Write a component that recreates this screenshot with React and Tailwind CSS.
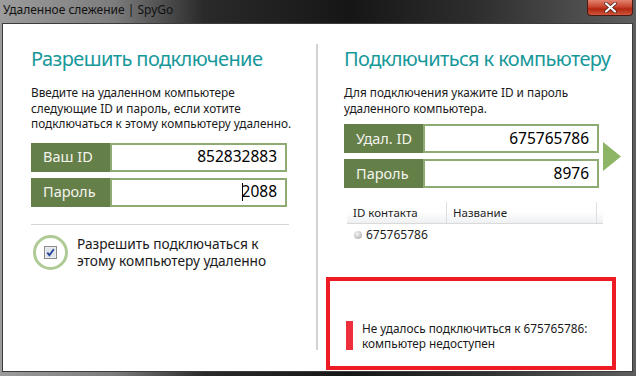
import React from 'react';

const font = { fontFamily: '"Noto Sans", "Open Sans", sans-serif' };

function Field({ label, value, caret }) {
  return (
    <div className="flex h-[29px]">
      <div className="w-[79px] shrink-0 bg-[#657f49] text-[#f4f4ee] text-[14.5px] flex items-center pl-[12px]">
        {label}
      </div>
      <div className="flex-1 border-2 border-[#8fab74] bg-white flex items-center justify-end pr-[8px] text-[15.5px] text-black">
        {caret && <span className="w-px h-[18px] bg-black mr-[-1px]" />}
        {value}
      </div>
    </div>
  );
}

function Checkbox() {
  return (
    <div className="w-[35px] h-[35px] shrink-0 rounded-full border-[3px] border-[#afcb95] flex items-center justify-center">
      <svg width="13" height="13" viewBox="0 0 13 13">
        <rect x="0.5" y="0.5" width="12" height="12" fill="#e9ecf0" stroke="#8c8c8c" />
        <rect x="2" y="2" width="9" height="9" fill="#dfe4ea" />
        <path d="M3.3 6.6 L5.4 9.2 L9.8 3.2" fill="none" stroke="#24419a" strokeWidth="1.8" />
      </svg>
    </div>
  );
}

export default function App() {
  return (
    <div
      className="w-[636px] h-[376px] flex flex-col bg-[linear-gradient(90deg,#9c9c9c_0%,#7c7c7c_18%,#2a2a2a_32%,#161616_55%,#2e2e2e_75%,#5e5e5e_100%)]"
      style={font}
    >
      {/* Title bar */}
      <div className="h-[23px] flex items-start justify-between shrink-0">
        <div className="pl-[3px] pt-[2px] text-[12px] leading-[16px] text-[#111]">
          Удаленное слежение | SpyGo
        </div>
        <div className="mr-[3px] w-[46px] h-[16px] rounded-b-[4px] border border-t-0 border-[#4a1a14] bg-[linear-gradient(180deg,#e2836f_0%,#c9452f_45%,#b2260f_60%,#d0563c_100%)] flex items-center justify-center">
          <svg width="13" height="11" viewBox="0 0 13 11">
            <path d="M2 1.5 L11 9.5 M11 1.5 L2 9.5" stroke="#3a1a18" strokeWidth="3.4" strokeLinecap="round" />
            <path d="M2 1.5 L11 9.5 M11 1.5 L2 9.5" stroke="#ffffff" strokeWidth="2.2" strokeLinecap="round" />
          </svg>
        </div>
      </div>

      {/* Client area */}
      <div className="flex-1 ml-[2px] mr-[3px] mb-[4px] border border-[#3c3c3c] bg-white flex">
        {/* Left panel */}
        <div className="w-[313px] shrink-0 pl-[28px] pt-[21px] flex flex-col">
          <h1 className="text-[20px] leading-[27px] tracking-[-0.6px] text-[#17989a] font-normal whitespace-nowrap">Разрешить подключение</h1>
          <p className="mt-[13px] text-[11.8px] leading-[15.5px] text-[#1a1a1a]">
            Введите на удаленном компьютере<br />
            следующие ID и пароль, если хотите<br />
            подключаться к этому компьютеру удаленно.
          </p>
          <div className="mt-[11px] w-[256px] flex flex-col gap-[6px]">
            <Field label="Ваш ID" value="852832883" />
            <Field label="Пароль" value="2088" caret />
          </div>
          <div className="mt-[17px] w-[258px] h-px bg-[#d6d6d6]" />
          <div className="mt-[10px] ml-[2px] flex items-center gap-[9px]">
            <Checkbox />
            <div className="text-[13.7px] leading-[17px] text-[#1a1a1a]">
              Разрешить подключаться к<br />
              этому компьютеру удаленно
            </div>
          </div>
        </div>

        {/* Divider */}
        <div className="w-[2px] shrink-0 mt-[20px] h-[306px] bg-[#d2d2d2]" />

        {/* Right panel */}
        <div className="flex-1 flex flex-col pt-[21px]">
          <div className="pl-[26px]">
            <h1 className="text-[20px] leading-[27px] tracking-[-0.6px] text-[#17989a] font-normal whitespace-nowrap">Подключиться к компьютеру</h1>
            <p className="mt-[13px] text-[11.8px] leading-[15.5px] text-[#1a1a1a]">
              Для подключения укажите ID и пароль<br />
              удаленного компьютера.
            </p>
            <div className="mt-[8px] flex items-center gap-[4px]">
              <div className="w-[255px] flex flex-col gap-[6px]">
                <Field label="Удал. ID" value="675765786" />
                <Field label="Пароль" value="8976" />
              </div>
              <svg width="18" height="29" viewBox="0 0 18 29">
                <path d="M0 0 L18 14.5 L0 29 Z" fill="#8db565" />
              </svg>
            </div>

            {/* Contacts table */}
            <div className="mt-[14px] ml-[3px] w-[256px] text-[11.5px] text-[#1e1e1e]">
              <div className="h-[22px] flex border-b border-[#dadada] bg-[linear-gradient(180deg,#ffffff_0%,#ffffff_45%,#eef0f2_100%)]">
                <div className="w-[100px] pl-[6px] flex items-center border-r border-[#dedede]">ID контакта</div>
                <div className="w-[150px] pl-[6px] flex items-center border-r border-[#dedede]">Название</div>
              </div>
              <div className="h-[21px] flex items-center pl-[7px] gap-[4px] text-[12px]">
                <span className="w-[8px] h-[8px] rounded-full bg-[radial-gradient(circle_at_40%_35%,#f4f4f4,#a6a6a6)]" />
                675765786
              </div>
            </div>
          </div>

          {/* Error box */}
          <div className="mt-auto mb-[1px] ml-[8px] w-[290px] h-[93px] border-[4px] border-[#ec1b24] flex items-end pb-[16px] pl-[16px]">
            <div className="flex items-stretch gap-[9px]">
              <div className="w-[7px] bg-[#ee2f3b]" />
              <div className="text-[11.8px] leading-[14.5px] text-[#1a1a1a]">
                Не удалось подключиться к 675765786:<br />
                компьютер недоступен
              </div>
            </div>
          </div>
        </div>
      </div>
    </div>
  );
}
